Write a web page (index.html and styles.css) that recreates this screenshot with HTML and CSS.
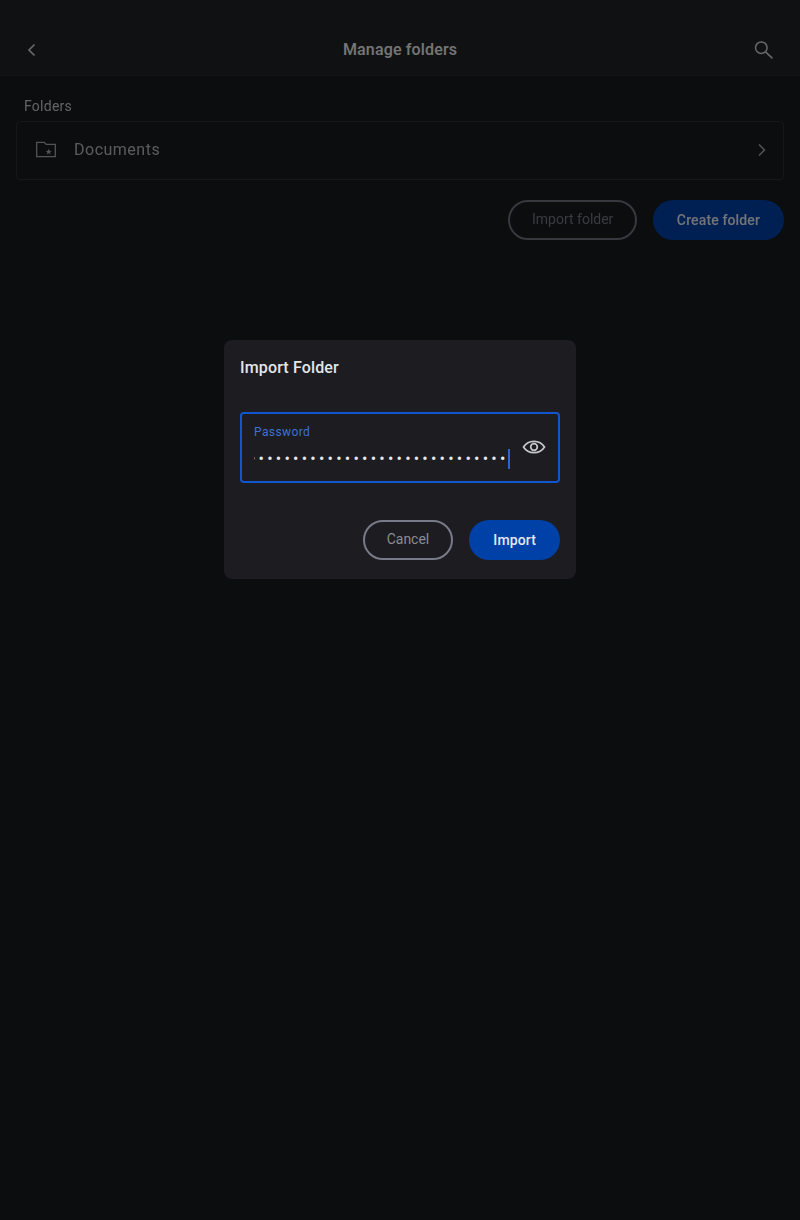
FILE: index.html
```html
<!DOCTYPE html>
<html lang="en">
<head>
<meta charset="utf-8">
<title>Manage folders</title>
<link rel="stylesheet" href="styles.css">
</head>
<body>
<div class="page">
  <header class="topbar">
    <button class="icon-btn back-btn" aria-label="Back">
      <svg width="24" height="24" viewBox="0 0 24 24" fill="none" stroke="currentColor" stroke-width="1.7"><path d="M14.500 6.500 9 12l5.500 5.500"/></svg>
    </button>
    <h1 class="title">Manage folders</h1>
    <button class="icon-btn search-btn" aria-label="Search">
      <svg width="24" height="24" viewBox="0 0 24 24" fill="none" stroke="currentColor" stroke-width="1.500"><circle cx="9.300" cy="9.700" r="5.800"/><path d="m13.500 13.900 7 6.500"/></svg>
    </button>
  </header>
  <main class="content">
    <div class="section-label">Folders</div>
    <div class="folder-row">
      <svg class="folder-icon" width="24" height="24" viewBox="0 0 24 24" fill="none"><path d="M2.700 4.400h7.500l2 2h9.100v12.300H2.700z" stroke="currentColor" stroke-width="1.300"/><polygon points="14.700,10.700 15.500,12.800 17.700,12.900 16,14.300 16.600,16.400 14.700,15.200 12.800,16.400 13.400,14.300 11.700,12.900 13.900,12.800" fill="currentColor"/></svg>
      <span class="folder-name">Documents</span>
      <svg class="chevron" width="24" height="24" viewBox="0 0 24 24" fill="none" stroke="currentColor" stroke-width="1.500"><path d="m9 6.500 5.500 5.500-5.500 5.500"/></svg>
    </div>
    <div class="actions">
      <button class="btn btn-outline btn-muted">Import folder</button>
      <button class="btn btn-primary">Create folder</button>
    </div>
  </main>
</div>
<div class="scrim">
  <section class="dialog">
    <h2 class="dialog-title">Import Folder</h2>
    <div class="field">
      <div class="field-body">
        <label class="field-label">Password</label>
        <div class="field-value"><span class="dots">••••••••••••••••••••••••••••••</span><span class="caret"></span></div>
      </div>
      <svg class="eye" width="24" height="24" viewBox="0 0 24 24" fill="none" stroke="currentColor" stroke-width="1.700"><path d="M1.500 12C4 8 7.500 6.300 12 6.300S20 8 22.500 12C20 16 16.500 17.700 12 17.700S4 16 1.500 12z"/><circle cx="12" cy="12" r="3.300"/></svg>
    </div>
    <div class="dialog-actions">
      <button class="btn btn-outline">Cancel</button>
      <button class="btn btn-primary">Import</button>
    </div>
  </section>
</div>
</body>
</html>
```
FILE: styles.css
```css
* { box-sizing: border-box; }
html, body { margin: 0; height: 100%; }
body {
  background: #191a1e;
  color: #e8e9ec;
  font-family: Roboto, "Liberation Sans", sans-serif;
  overflow: hidden;
}
.page { height: 1220px; will-change: opacity; }
.topbar {
  height: 76px;
  padding: 24px 24px 0;
  display: grid;
  grid-template-columns: 1fr auto 1fr;
  align-items: center;
  background: #212226;
  border-bottom: 1px solid #2a2b30;
}
.icon-btn {
  width: 24px;
  height: 24px;
  padding: 0;
  border: 0;
  background: none;
  color: #d0d1d6;
  display: block;
}
.back-btn { margin-left: -4px; }
.search-btn { justify-self: end; }
.icon-btn svg { display: block; }
.title {
  margin: 0;
  font-size: 16px;
  font-weight: 500;
  line-height: 24px;
  letter-spacing: 0.15px;
  color: #eceded;
}
.content { padding: 20px 16px 0; }
.section-label {
  padding-left: 8px;
  font-size: 14px;
  line-height: 20px;
  letter-spacing: 0.25px;
  color: #c6c7cc;
}
.folder-row {
  margin-top: 4.500px;
  height: 59px;
  padding: 0 9px 0 17px;
  display: flex;
  align-items: center;
  border: 1px solid #2e2f34;
  border-radius: 4px;
  color: #b6b7bc;
}
.folder-icon { flex: none; color: #a8a9ae; }
.folder-name {
  margin-left: 16px;
  margin-top: -1px;
  flex: 1;
  font-size: 16px;
  letter-spacing: 0.5px;
}
.chevron { flex: none; color: #a8a9ae; }
.actions {
  margin-top: 20.500px;
  display: flex;
  justify-content: flex-end;
  gap: 16px;
}
.btn {
  height: 40px;
  border-radius: 20px;
  font-family: inherit;
  font-size: 14px;
  line-height: 20px;
}
.btn-outline {
  padding: 0 22px 1px;
  background: transparent;
  border: 2px solid #777a88;
  font-weight: 400;
  color: #8a8c95;
}
.btn-muted {
  padding: 0 21.500px 2px;
  border-color: #6e7180;
  color: #74767e;
}
.btn-primary {
  padding: 0 24px;
  background: #0041a8;
  border: 0;
  font-weight: 500;
  letter-spacing: 0.13px;
  color: #e6e8ee;
}
.scrim {
  position: fixed;
  inset: 0;
  padding-top: 339.500px;
  background: rgba(0, 0, 0, 0.5);
  display: flex;
  justify-content: center;
  align-items: flex-start;
}
.dialog {
  width: 352px;
  height: 239.500px;
  padding: 16px;
  background: #1c1c21;
  border-radius: 8px;
  will-change: opacity;
}
.dialog-title {
  margin: 0;
  font-size: 16px;
  font-weight: 500;
  line-height: 23px;
  letter-spacing: 0.15px;
  color: #e4e5e8;
}
.field {
  margin-top: 33px;
  height: 71.500px;
  padding: 0 12px;
  display: flex;
  align-items: flex-start;
  border: 2px solid #1256cf;
  border-radius: 4px;
}
.field-body { flex: 1; min-width: 0; }
.field-label {
  display: block;
  margin-top: 11px;
  font-size: 12px;
  line-height: 14px;
  letter-spacing: 0.4px;
  color: #3f70d8;
}
.field-value {
  margin-top: 10px;
  height: 20px;
  display: flex;
  align-items: center;
}
.dots {
  width: 254px;
  overflow: hidden;
  white-space: nowrap;
  font-size: 16px;
  line-height: 20px;
  letter-spacing: 3.220px;
  text-indent: -4px;
  color: #e8e9ec;
}
.caret {
  width: 2px;
  height: 20px;
  background: #2a63d8;
}
.eye {
  flex: none;
  margin-top: 21.500px;
  color: #c6c7cb;
}
.dialog-actions {
  margin-top: 36.500px;
  display: flex;
  justify-content: flex-end;
  gap: 16px;
}
```
